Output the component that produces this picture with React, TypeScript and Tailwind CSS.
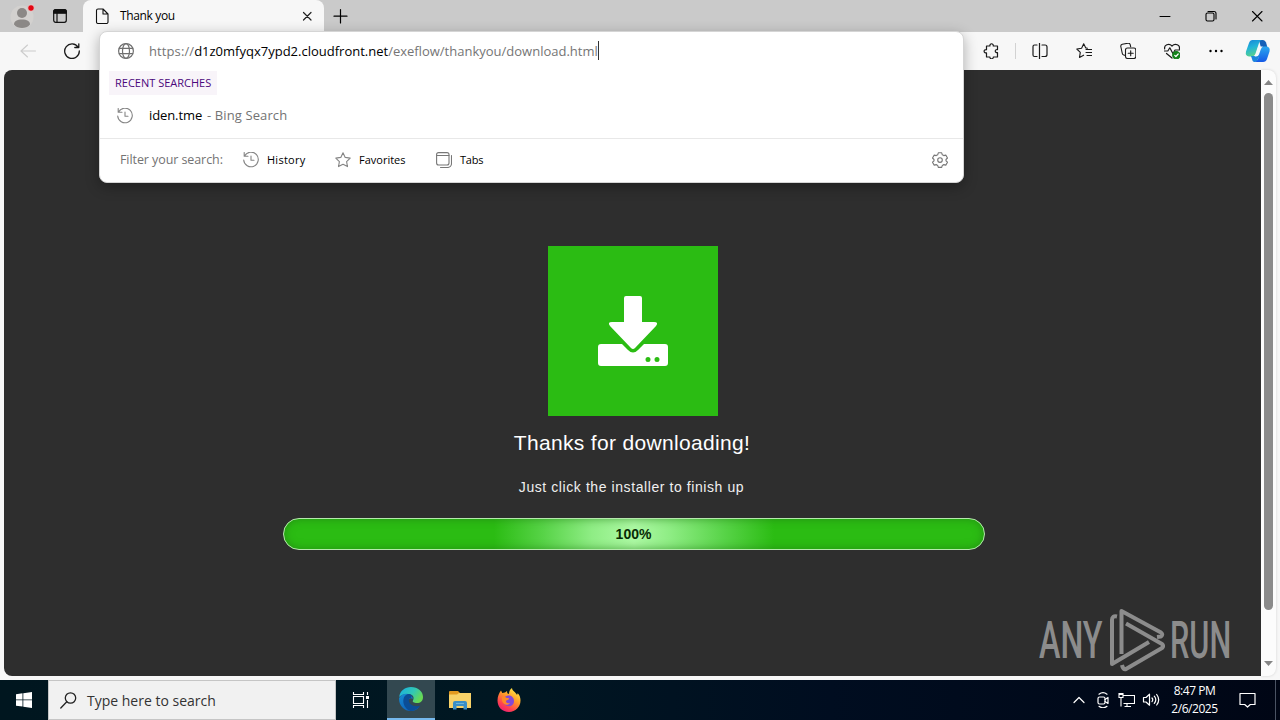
import React from "react";

type IconProps = { className?: string; children: React.ReactNode; size?: number; sw?: number };

function Icon({ className = "", children, size = 16, sw = 1 }: IconProps) {
  return (
    <svg width={size} height={size} viewBox={`0 0 ${size} ${size}`} fill="none" stroke="currentColor" strokeWidth={sw} strokeLinecap="round" strokeLinejoin="round" className={`block shrink-0 ${className}`}>
      {children}
    </svg>
  );
}

function HistoryIcon() {
  return (
    <Icon className="text-[#858585]" sw={1.1}>
      <path d="M1.200.5v3.800H5M1.500 4.100A7.300 7.300 0 1 1 .7 8M8 4v4.300h3" />
    </Icon>
  );
}

function TabStrip() {
  return (
    <div className="flex h-8 items-center bg-[#cacaca]">
      <div className="flex h-8 w-[83px] items-center">
        <svg width="26" height="28" viewBox="0 0 26 28" className="ml-2.5 block">
          <circle cx="12" cy="15" r="11.5" fill="#d3d1cf" />
          <circle cx="12" cy="11" r="5" fill="#8b8886" />
          <path d="M4 22.5c0-3.500 3-5 8-5s8 1.500 8 5c-2 2.700-5 3.500-8 3.500s-6-.8-8-3.500Z" fill="#8b8886" />
          <circle cx="21" cy="6" r="3.300" fill="#e30613" stroke="#e5e2e0" strokeWidth=".8" />
        </svg>
        <Icon className="ml-[16px] text-[#111]" size={16} sw={1.2}>
          <rect x="1.700" y="1.700" width="12.600" height="12.600" rx="2" />
          <path d="M1.700 3.700a2 2 0 0 1 2-2h8.600a2 2 0 0 1 2 2v1.500H1.700Z" fill="currentColor" />
          <path d="M5 5v9" />
        </Icon>
      </div>
      <div className="flex h-8 w-[241px] items-center rounded-t-lg bg-[#f7f7f7]">
        <Icon className="ml-[11px] text-[#111]" size={16} sw={1.1}>
          <path d="M2.500 2.500a1.500 1.500 0 0 1 1.500-1.500h5l5 5v8a1.500 1.500 0 0 1-1.500 1.500H4A1.500 1.500 0 0 1 2.500 14ZM9 1v5h5" />
        </Icon>
        <span className="ml-[10px] w-[179px] whitespace-nowrap text-[12px] leading-4 tracking-[-0.35px] text-black">Thank you</span>
        <Icon className="text-[#222]" size={16} sw={1.2}>
          <path d="m4.500 4.500 7.500 7.500M12 4.500 4.500 12" />
        </Icon>
      </div>
      <Icon className="ml-2 text-black" size={16} sw={1.2}>
        <path d="M8.500 1.500v13.500M2 8.200h13" />
      </Icon>
      <div className="ml-auto mr-[15px] flex items-center gap-[30px] text-black">
        <Icon sw={1}><path d="M3 8.500h10" /></Icon>
        <Icon sw={1.1}>
          <rect x="3" y="5" width="8" height="8" rx="1.500" />
          <path d="M5 3.500h6a2 2 0 0 1 2 2V11" />
        </Icon>
        <Icon sw={1.1}><path d="m3.500 3.500 9.500 9.500M13 3.500 3.500 13" /></Icon>
      </div>
    </div>
  );
}

function Copilot() {
  return (
    <svg width="26" height="24" viewBox="0 0 26 24" className="block">
      <defs>
        <linearGradient id="ca" x1="0" y1="0" x2=".3" y2="1"><stop stopColor="#1784d8" /><stop offset=".5" stopColor="#22b4d8" /><stop offset="1" stopColor="#55d08f" /></linearGradient>
        <linearGradient id="cb" x1="0" y1="0" x2="0" y2="1"><stop stopColor="#2aa8ef" /><stop offset="1" stopColor="#1559e6" /></linearGradient>
      </defs>
      <path d="M14 1h3.500q3 0 4 4l1 4H16Z" fill="#1560b8" />
      <path d="M7.500 1H17q-2 0-3 3l-3.500 10.500q-1 3-4 3H4q-4-.5-3-5L4 4Q5 1 7.500 1Z" fill="url(#ca)" />
      <path d="M6 17h5l4-8 3 0-5 11q-1 3-3.500 3-2 0-2.500-3Z" fill="#1a86dc" />
      <path d="M18.500 7.500h3q4 .5 3 5L22 20q-1 3-4 3H9.500q2.500-.5 3.500-3l3-9.500q.8-3 2.500-3Z" fill="url(#cb)" />
      <path d="M13 8.500q.5-1 2-1h3q-1.500 1-2.200 3l-1.800 5q-.7 2-3 2H9.500q1-.5 1.500-2Z" fill="#f4f8fc" />
    </svg>
  );
}

function Toolbar() {
  return (
    <div className="flex h-[38px] items-center bg-[#f7f7f7]">
      <Icon className="ml-5 text-[#ccc]" sw={1.1}><path d="M15.500 8H1m6.500-6L1 8l6.500 6" /></Icon>
      <Icon className="ml-7 text-[#1a1a1a]" sw={1.3}><path d="M14.200 4.300A7.300 7.300 0 1 0 15.300 8M14.800.8v3.700h-4" /></Icon>
      <div className="ml-auto flex items-center text-[#1a1a1a]">
        <Icon sw={1.200} className="mr-4">
          <path d="M4.500 3h2.400c-.4-3 3.700-3 3.400 0h4.200v3.600c-3-.6-3 3.400 0 3.100V14h-4.200c.3 2.500-3.800 2.500-3.400 0H3.500v-4.100C.3 10.100.3 6.400 3.500 6.600V3Z" />
        </Icon>
        <div className="mr-4 h-4 w-px bg-[#d2d2d2]" />
        <Icon sw={1.200} className="mr-7"><path d="M7.500 0v16M5 2H2.500A1.500 1.500 0 0 0 1 3.500V12a1.500 1.500 0 0 0 1.500 1.500H5M10 2h3a2 2 0 0 1 2 2v7.500a2 2 0 0 1-2 2h-3" /></Icon>
        <Icon sw={1.100} className="mr-7"><path d="M11.500 5.200 9.800 4.900 7.700.8 5.600 5.200.8 6l3.500 3.400-.8 5 4.100-2.200M10 6.500h6M10 9.500h6M11 12.500h5" /></Icon>
        <Icon sw={1.100} className="mr-7">
          <path d="M5.500 12.500 3.700 12a2 2 0 0 1-1.500-2L.8 3.500A2 2 0 0 1 2.300 1.300L8 .2a2 2 0 0 1 2.200 1.500l.5 2.100" />
          <rect x="5.500" y="5" width="10.300" height="10.500" rx="2" />
          <path d="M10.700 7.700v5M8.200 10.200h5" />
        </Icon>
        <Icon sw={1.200} className="mr-7">
          <path d="M.7 6C-.2 2.300 4.800-.5 8 3c3.400-3.500 8.300-.7 7.400 3M.5 8h3.300l2-3.200 3.200 6L11 7h4.500M2.500 10.500 8 15" />
          <circle cx="12.300" cy="12.200" r="3.600" fill="#14811b" stroke="#14811b" />
          <path d="m10.700 12.300 1.200 1.200 2.300-2.500" stroke="#fff" />
        </Icon>
        <svg width="16" height="16" viewBox="0 0 16 16" className="mr-[21px] block"><circle cx="2.500" cy="8" r="1.200" /><circle cx="8" cy="8" r="1.200" /><circle cx="13.500" cy="8" r="1.200" /></svg>
        <div className="mr-[9px]"><Copilot /></div>
      </div>
    </div>
  );
}

function AddressPopup() {
  return (
    <div className="absolute left-[99px] top-[31px] flex h-[152px] w-[865px] flex-col rounded-lg border border-[#d5d5d5] bg-white shadow-[0_4px_14px_rgba(0,0,0,0.3)]">
      <div className="flex h-[39px] items-center pb-px pl-[18px]">
        <Icon className="text-[#707070]" sw={1.200}>
          <circle cx="8" cy="8" r="7.400" /><ellipse cx="8" cy="8" rx="3.500" ry="7.400" /><path d="M1.300 5.300h13.400M1.300 10.700h13.400" />
        </Icon>
        <div className="ml-[15px] flex items-center whitespace-nowrap pb-px text-[13px] leading-5 text-[#757575]">
          <span className="tracking-[0.1px]">https://</span>
          <span className="text-black">d1z0mfyqx7ypd2.cloudfront.net</span>
          <span>/exeflow/thankyou/download.html</span>
          <i className="h-[19px] w-px bg-[#333]" />
        </div>
      </div>
      <div className="ml-[9px] flex h-[24px] w-[108px] items-center whitespace-nowrap bg-[#f8f4f9] pl-1.5 pt-px text-[11px] text-[#4b087c]">RECENT SEARCHES</div>
      <div className="flex h-[43px] items-center whitespace-nowrap pb-0.5 pl-[17px] text-[13px]">
        <HistoryIcon />
        <span className="ml-4 tracking-[-0.1px] text-black">iden.tme</span>
        <span className="ml-[5px] tracking-[0.1px] text-[#737373]">- Bing Search</span>
      </div>
      <div className="flex h-[44px] items-center whitespace-nowrap border-t border-[#e8e8e8] pb-px pl-5 pr-[15px] text-[11px] text-black">
        <span className="w-[123px] pt-px text-[12.5px] tracking-[-0.08px] text-[#737373]">Filter your search:</span>
        <HistoryIcon />
        <span className="ml-2 w-[68px] tracking-[0.25px]">History</span>
        <Icon className="text-[#858585]" sw={1.100}><path d="m8 .8 2.200 4.600 5 .7-3.600 3.500.9 5L8 12.200l-4.500 2.400.9-5L.8 6.100l5-.7Z" /></Icon>
        <span className="ml-2 w-[77px]">Favorites</span>
        <Icon className="text-[#777]" sw={1.100}><rect x=".6" y=".6" width="12.400" height="12.400" rx="2" /><path d="M.6 3.500H13M15.500 3.500v8a4 4 0 0 1-4 4h-7" /></Icon>
        <span className="ml-2 tracking-[-0.2px]">Tabs</span>
        <Icon className="ml-auto text-[#777]" sw={1.100}>
          <path d="M6.300.8h3.400l.6 2 1.500.8 2-.5 1.700 2.900L14 7.500v1.300l1.500 1.400-1.700 2.900-2-.5-1.500.8-.6 2H6.300l-.6-2-1.500-.8-2 .5-1.700-2.900L2 8.800V7.500L.5 6l1.700-2.900 2 .5 1.500-.8Z" /><circle cx="8" cy="8.100" r="2.300" />
        </Icon>
      </div>
    </div>
  );
}

function Watermark() {
  return (
    <div className="absolute right-[28px] bottom-[3px] flex h-[66px] w-[194px] items-center justify-between text-[#8c8c8c]">
      <span className="w-[64px] origin-left scale-x-[0.62] whitespace-nowrap pt-0.5 font-['Roboto',sans-serif] text-[52px] leading-[64px] font-medium">ANY</span>
      <svg width="56" height="64" viewBox="0 0 56 64" fill="none" stroke="#8c8c8c" strokeWidth="4" strokeLinejoin="round">
        <path d="M8 8.500Q3 7.500 3 12v44L40 34" />
        <path d="M12.500 46V3L52 24.500q2.500 2 0 4l-4 .5" />
        <path d="m17 15.500 36 20.500q2 2 0 4L17 61q-3 1-4-4" />
      </svg>
      <span className="w-[63px] origin-left scale-x-[0.59] whitespace-nowrap pt-0.5 font-['Roboto',sans-serif] text-[52px] leading-[64px] font-medium">RUN</span>
    </div>
  );
}

function DownloadPage() {
  return (
    <div className="relative flex w-[1257px] flex-col items-center rounded-l-lg bg-[#2e2e2e] pt-[176px] font-['Liberation_Sans',Arial,sans-serif] text-white">
      <div className="flex size-[170px] items-center justify-center bg-[#2bbc13]">
        <svg width="70" height="70" viewBox="0 0 70 70" fill="#fff">
          <path d="M28 0h14q2 0 2 2v24h12q5 0 2 4L37 52q-2 2-4 0L12 30q-3-4 2-4h12V2q0-2 2-2Z" />
          <path fillRule="evenodd" d="M3 48h21l6 6q5 5 10 0l6-6h21q3 0 3 3v16q0 3-3 3H3q-3 0-3-3V51q0-3 3-3Zm47 13a2.500 2.500 0 1 0 0 5 2.500 2.500 0 0 0 0-5Zm9 0a2.500 2.500 0 1 0 0 5 2.500 2.500 0 0 0 0-5Z" />
        </svg>
      </div>
      <div className="mr-px mt-[14px] whitespace-nowrap text-[21px] leading-[26px] tracking-[0.33px]">Thanks for downloading!</div>
      <div className="mr-[2px] mt-[21px] whitespace-nowrap text-[14px] leading-5 tracking-[0.58px] text-[#f0f0f0]">Just click the installer to finish up</div>
      <div className="ml-[2px] mt-[21px] flex h-8 w-[702px] items-center justify-center rounded-full border border-[#b5e9ac] bg-[linear-gradient(90deg,#2bbc13_30%,#57d347_37%,#8fed85_44%,#adf9a4_50%,#8fed85_55%,#57d347_63%,#2bbc13_70%)] text-[14px] font-bold text-[#082b04] shadow-[inset_0_0_9px_rgba(30,120,20,0.65)]">100%</div>
      <Watermark />
    </div>
  );
}

function EdgeLogo() {
  return (
    <svg width="24" height="24" viewBox="0 0 24 24" className="block">
      <defs>
        <linearGradient id="ea" x1="0" y1="0" x2="1" y2=".5"><stop stopColor="#16aee5" /><stop offset=".6" stopColor="#32c8b4" /><stop offset="1" stopColor="#67d954" /></linearGradient>
        <linearGradient id="eb" x1="0" y1="0" x2=".6" y2="1"><stop stopColor="#168bd2" /><stop offset="1" stopColor="#0e61bb" /></linearGradient>
      </defs>
      <path d="M.2 10C1 3.800 6 0 12 0c7 0 12 4.500 12 10 0 4-2.500 6-6 6-3 0-5-1-4-2.500 2-4-1-6.500-5-6.500-4 0-7 1-8.800 3Z" fill="url(#ea)" />
      <path d="M.1 11C2 7.500 6 6 9 7c4 1 5 3.500 4.800 5-.8-.8-2-1-3-.4C5 14 9 22 20 20 18 22.500 15.500 24 12 24 5 24-.4 18 .1 11Z" fill="url(#eb)" />
      <path d="M9 7c-7 2-6 14 2.500 17C15 24 19 22 21.500 18.500c-7 2.500-12-2-11.700-5.500.2-1.300 1-1.900 2-1.900C14 9 12 7 9 7Z" fill="#0b4d96" />
    </svg>
  );
}

function Taskbar() {
  return (
    <div className="flex h-10 bg-[linear-gradient(90deg,#00161f_0%,#001722_40%,#000d20_65%,#000615_100%)] text-white">
      <div className="flex w-12 items-center justify-center">
        <svg width="16" height="16" viewBox="0 0 16 16" fill="#fff"><path d="M0 2.300 6.500 1.300v6.200H0ZM7.300 1.200 16 0v7.500H7.300ZM0 8.300h6.500v6.300L0 13.700ZM7.300 8.300H16V16l-8.700-1.200Z" /></svg>
      </div>
      <div className="flex w-72 items-center border border-[#c5c5c5] bg-[#f1f1f1] pl-[11px]">
        <Icon size={17} className="text-[#222]" sw={1.300}><circle cx="10.500" cy="6" r="5.200" /><path d="M6.800 9.700.8 16" /></Icon>
        <span className="ml-[10px] whitespace-nowrap text-[14px] text-[#333]">Type here to search</span>
      </div>
      <div className="flex w-[51px] items-center justify-center pr-[3px]">
        <svg width="17" height="16" viewBox="0 0 17 16" fill="none" stroke="#fff" strokeWidth="1.100"><path d="M1.500 0v2.500h10V0M1.500 16v-2.500h10V16M1.500 4.500v7h10v-7ZM15.500 0v3M15.500 8v8" /><path d="M14.500 4.500h2v2h-2Z" fill="#fff" /></svg>
      </div>
      <div className="flex w-12 items-center justify-center border-b-2 border-[#76b9ed] bg-[#334850]"><EdgeLogo /></div>
      <div className="flex w-[49px] items-center justify-center">
        <svg width="22" height="19" viewBox="0 0 22 19"><path d="M0 1q0-1 1-1h8l2 2h10q1 0 1 1v14H0Z" fill="#e39a20" /><path d="M0 3.500h8L10 2h12v15H0Z" fill="#f8d268" /><path d="M4 18.500V12q0-2 2-2h10q2 0 2 2v6.500h-3.500V15h-7v3.500Z" fill="#3a8fc6" /><path d="M7 12.500h8" stroke="#6ab5dc" /></svg>
      </div>
      <div className="flex w-[49px] items-center justify-center">
        <svg width="24" height="24" viewBox="0 0 24 24">
          <defs><linearGradient id="fa" x1=".8" y1="0" x2=".2" y2="1"><stop stopColor="#fff04a" /><stop offset=".4" stopColor="#ff9c28" /><stop offset=".75" stopColor="#ff4050" /><stop offset="1" stopColor="#e81b78" /></linearGradient></defs>
          <path d="M4 2.500 5.300 5 8 4.500 10 3l.3 2.200L12 6c0-2 .7-4.500 3-6 0 3 4 4.200 5 7l.7-1.700c2 2 2.800 4.500 2.800 7A11.500 11.500 0 0 1 12 24C5 24 .5 19 .5 12.500.5 8.500 2 5 4 2.500Z" fill="url(#fa)" />
          <path d="M8 9c3-3 9-1.500 9 4 0 3.500-2.500 5.500-5.500 5.200C8 18 6 15.500 7 13l3-.8 2-1.500-3-.4Z" fill="#8348d7" />
          <path d="M5 9c2-1 3-.3 4 .8l3 .5c0 2-2.500 1.500-3 2.500-.5 2 2 3 4 2-2 4-8 1.500-8-3Z" fill="#ff8a26" />
        </svg>
      </div>
      <div className="ml-auto flex items-center">
        <Icon size={12} className="mr-[10px]" sw={1.200}><path d="m1 8.500 5-5 5 5" /></Icon>
        <Icon size={16} className="mr-[7px]" sw={1.200}><path d="M4 2.200q4-3 8 0M4 14.300q4 3 8 0" /><rect x="3" y="5" width="7" height="7" rx="1.500" /><path d="m10 7.500 3-2v6l-3-2" /></Icon>
        <svg width="17" height="16" viewBox="0 0 17 16" fill="none" stroke="#fff" strokeWidth="1.100" className="mr-[7px]"><path d="M5.500 3.500h11v8h-11M9 11.500v3M6.500 14.500H13M1 1.500h4v4H1ZM3 5.500v9" /><path d="M1 2.500h4" /></svg>
        <Icon size={18} className="mr-[9px]" sw={1.200}><path d="M1.500 6.500H4l3.500-3.300v11L4 11H1.500ZM10 7q1.500 1.800 0 3.600M12.300 5.200q3 3.500 0 7.200M14.700 3.500q4 5.300 0 10.500" /></Icon>
        <div className="flex w-[51px] flex-col items-center whitespace-nowrap text-[12px] leading-[18px] tracking-[-0.45px]"><span>8:47 PM</span><span>2/6/2025</span></div>
        <Icon size={17} className="ml-[19px]" sw={1.200}><path d="M1 1.500h15v11h-4.700L8.500 15l-2.800-2.500H1Z" /></Icon>
        <div className="ml-[19px] mr-1 h-10 w-px bg-[#4a5363]" />
      </div>
    </div>
  );
}

export default function App() {
  return (
    <div className="relative flex h-[720px] w-[1280px] flex-col overflow-hidden bg-[#f7f7f7] font-['Open_Sans','Noto_Sans',sans-serif]">
      <TabStrip />
      <Toolbar />
      <div className="flex h-[606px] pl-1">
        <DownloadPage />
        <div className="flex w-[15px] flex-col items-center rounded-r-lg bg-[#fcfcfc] shadow-[0_0_3px_rgba(0,0,0,0.15)]">
          <svg width="11" height="7" viewBox="0 0 11 7" className="mt-[9px]"><path d="m1 6 4.500-5L10 6Z" fill="#858585" /></svg>
          <div className="mt-[7px] h-[517px] w-[9px] rounded-full bg-[#8b8b8b]" />
          <svg width="11" height="7" viewBox="0 0 11 7" className="mt-[50px]"><path d="m1 1 4.500 5L10 1Z" fill="#858585" /></svg>
        </div>
      </div>
      <div className="h-1" />
      <Taskbar />
      <AddressPopup />
    </div>
  );
}
